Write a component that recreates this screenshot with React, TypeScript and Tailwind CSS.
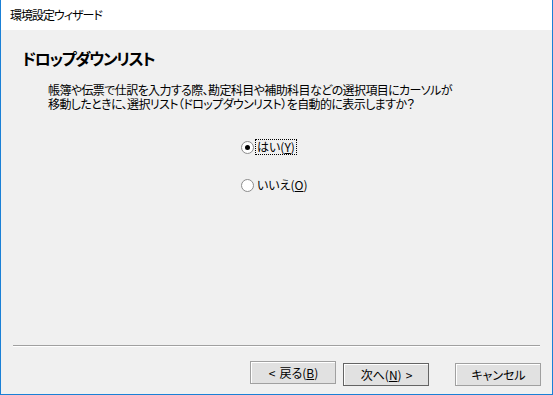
import React from "react";

const font = "font-['Noto_Sans_CJK_JP','Noto_Sans',sans-serif]";

const Radio = ({ checked, label, hotkey, focused }: { checked?: boolean; label: string; hotkey: string; focused?: boolean }) => (
  <div className="flex h-[16px] items-center">
    <span className="flex h-[13px] w-[13px] items-center justify-center rounded-full border border-[#8c8c8c] bg-white">
      {checked && <span className="h-[5px] w-[5px] rounded-full bg-black" />}
    </span>
    <span
      className={`ml-[1px] px-[1px] text-[12px] leading-[14px] [font-feature-settings:'palt'] ${
        focused ? "border border-dotted border-black" : "border border-transparent"
      }`}
    >
      {label}(<span className="underline">{hotkey}</span>)
    </span>
  </div>
);

const Button = ({ children, def }: { children: React.ReactNode; def?: boolean }) => (
  <button
    className={`h-[23px] w-[86px] bg-[#e1e1e1] text-[12px] leading-none text-black ${
      def ? "border border-[#646464]" : "border border-[#a0a0a0]"
    }`}
  >
    <span className="flex h-full w-full items-center justify-center border-l border-t border-l-white border-t-white [font-feature-settings:'palt']">
      {children}
    </span>
  </button>
);

export default function App() {
  return (
    <div className={`flex h-[395px] w-[553px] flex-col border border-t-0 border-[#1a80d6] bg-[#f0f0f0] text-black ${font}`}>
      {/* title bar */}
      <div className="flex h-[30px] items-center bg-white pl-[9px] text-[12px] tracking-[-1px] [font-feature-settings:'palt']">
        環境設定ウィザード
      </div>

      <div className="flex flex-1 flex-col">
        <h1 className="pl-[21px] pt-[18px] text-[16px] font-bold leading-[20px] tracking-[-1.4px] [font-feature-settings:'palt']">
          ドロップダウンリスト
        </h1>
        <p className="mt-[15px] pl-[47px] text-[12px] leading-[14px] tracking-[-0.6px] [font-feature-settings:'palt']">
          帳簿や伝票で仕訳を入力する際、勘定科目や補助科目などの選択項目にカーソルが
          <br />
          移動したときに、選択リスト（ドロップダウンリスト）を自動的に表示しますか？
        </p>

        <div className="mt-[28px] flex flex-col gap-[22px] pl-[240px]">
          <Radio checked focused label="はい" hotkey="Y" />
          <Radio label="いいえ" hotkey="O" />
        </div>

        <div className="flex-1" />

        <div className="mx-[12px] border-b border-t border-b-white border-t-[#a0a0a0]" />

        <div className="mb-[8px] mt-[14px] flex justify-end pr-[11px]">
          <Button>
            <span className="mr-[4px]">&lt;</span>戻る(<span className="underline">B</span>)
          </Button>
          <div className="ml-[7px]">
            <Button def>
              次へ(<span className="underline">N</span>)<span className="ml-[4px]">&gt;</span>
            </Button>
          </div>
          <div className="ml-[26px]">
            <Button>キャンセル</Button>
          </div>
        </div>
      </div>
    </div>
  );
}
